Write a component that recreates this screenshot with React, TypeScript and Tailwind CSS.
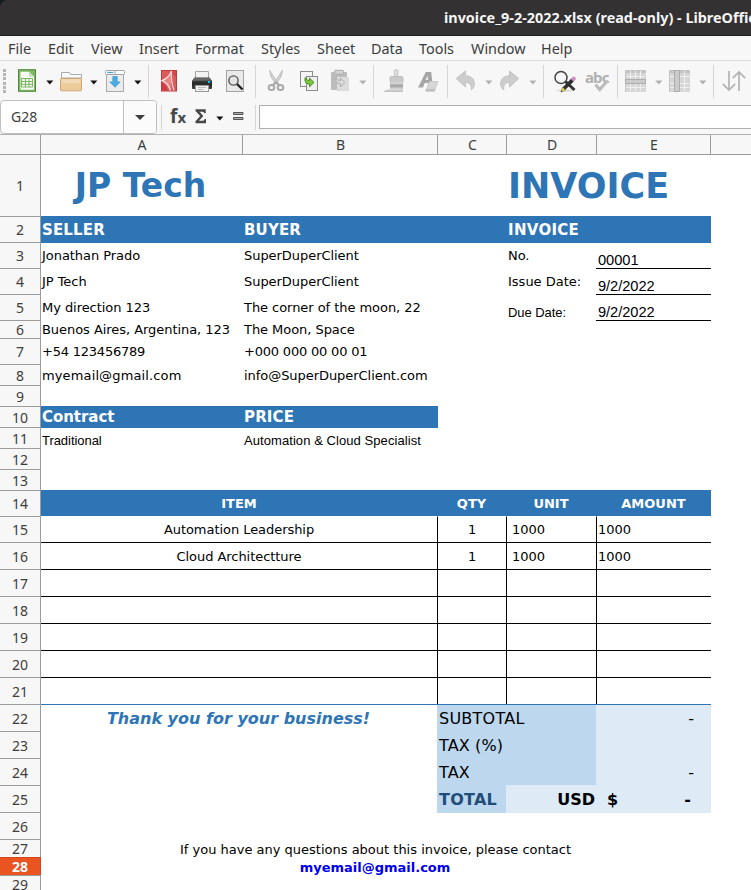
import type { ReactNode } from "react";

const UI = "font-['Noto_Sans',sans-serif]";
const LIB = "font-['Liberation_Sans',Arial,sans-serif]";

/* ---------- toolbar pieces ---------- */

function Icon({ ml, children }: { ml: string; children: ReactNode }) {
  return (
    <svg viewBox="0 0 24 24" className={`h-6 w-6 shrink-0 ${ml}`} fill="none">
      {children}
    </svg>
  );
}

function Arrow({ ml, color = "fill-[#111]" }: { ml: string; color?: string }) {
  return (
    <svg viewBox="0 0 8 24" className={`h-6 w-2 shrink-0 ${ml} ${color}`}>
      <path d="M0.3 11.5h7L3.8 15.6z" />
    </svg>
  );
}

function Sep({ ml }: { ml: string }) {
  return <div className={`h-[33px] w-px shrink-0 bg-[#d6d6d6] ${ml}`} />;
}

const GREY = "fill-[#b0b0b0]";

function TableIcon({ ml, vertical }: { ml: string; vertical?: boolean }) {
  return (
    <Icon ml={ml}>
      <rect x="1" y="1" width="21" height="22" rx="1" fill="#d6d6d6" />
      <path d="M1 2a1 1 0 0 1 1-1h19a1 1 0 0 1 1 1v2H1z" fill="#c3c3c3" />
      <path d="M1.500 1v22" stroke="#c6c6c6" />
      <path d="M6.5 2v20M11.5 2v20M16.5 2v20M2 7.5h19M2 14.500h19M2 18.5h19" stroke="#f0f0f0" />
      {vertical ? (
        <rect x="6.5" y="1.5" width="5" height="21" fill="#cbcbcb" stroke="#adadad" />
      ) : (
        <rect x="1.5" y="10.5" width="20" height="4" fill="#cbcbcb" stroke="#adadad" />
      )}
    </Icon>
  );
}

function Toolbar() {
  return (
    <div className="flex h-[39px] w-[760px] items-center pt-[1px]">
      <div className="ml-[3px] flex h-6 w-[3px] shrink-0 flex-col justify-between">
        {[0, 1, 2, 3, 4, 5].map((i) => (
          <div key={i} className="h-[3px] w-[3px] bg-[#b5b5b5]" />
        ))}
      </div>
      <Icon ml="ml-[9px]">
        <rect x="3.5" y="0.7" width="17" height="21.6" fill="#7fb765" stroke="#4c8a37" />
        <path d="M5.500 2.700h8.500l5 5v13.1H5.500z" fill="#f8fbf5" />
        <path d="M14 2.700v5h5z" fill="#c4e0b6" />
        <path d="M6.5 9.500h11v8.500h-11zM6.5 12.500h11M6.5 15.300h11M10.500 9.500V18M14 9.500V18" stroke="#7bb45f" />
      </Icon>
      <Arrow ml="ml-[7px]" />
      <Icon ml="ml-[5px]">
        <path d="M2.500 9V3.5h8l1 2h11V9z" fill="#fafafa" stroke="#aaa" />
        <rect x="1.5" y="9.500" width="21" height="12.300" rx="0.7" fill="#eccb9c" stroke="#cfa873" />
        <path d="M2.5 10.200h19v4h-19z" fill="#f0d9b4" />
      </Icon>
      <Arrow ml="ml-[7px]" />
      <Icon ml="ml-[5px]">
        <rect x="3.5" y="5" width="17" height="17.5" fill="#ececec" stroke="#aaa" />
        <rect x="2.5" y="1.5" width="19" height="4" rx="0.8" fill="#fff" stroke="#a5a5a5" />
        <path d="M4.3 3.5h6" stroke="#4ba3da" strokeWidth="1.3" />
        <path d="M12 1.5v4" stroke="#999" />
        <path d="M9.8 7.5h4.4v5.4h3L12 18.3l-5.2-5.4h3z" fill="#4bacdf" stroke="#2b8cc4" strokeWidth="0.6" />
      </Icon>
      <Arrow ml="ml-[7px]" />
      <Sep ml="ml-[6px]" />
      <Icon ml="ml-[8px]">
        <rect x="4.5" y="1.5" width="15" height="20.5" fill="#dd5a5c" stroke="#c0393d" />
        <path d="M5 2h14v6L12 2z" fill="#d9474a" />
        <path d="M14.500 2q-2.500 7-9.500 9.600 5.800 2 8.500 10 .4-10 1-19.600z" fill="#e88587" />
        <path d="M14.500 2q-2.500 7-9.500 9.600 5.800 2 8.500 10" stroke="#f9dede" strokeWidth="1.300" />
        <path d="M14.500 2q-.8 10 2.500 19.600" stroke="#f6d0d0" strokeWidth="1.300" />
        <path d="M5 13v8.500h6Q9 16 5 13z" fill="#cf3d42" />
      </Icon>
      <Icon ml="ml-[9px]">
        <path d="M5.500 9V2.500h13V9" fill="#f2f2f2" stroke="#a5a5a5" />
        <path d="M4.500 8.500h15l2.500 3.500v7q0 1-1 1H3q-1 0-1-1v-7z" fill="#3b3b3b" />
        <path d="M4.500 9h15l1.800 2.800H2.700z" fill="#666" />
        <path d="M2 13h20v4H2z" fill="#2b2b2b" />
        <rect x="18" y="12" width="2" height="2" fill="#19c1e6" />
        <rect x="5.500" y="16.500" width="13" height="6" fill="#f1f1f1" stroke="#999" />
        <path d="M8 18.500h8M8 20.500h5" stroke="#bbb" />
      </Icon>
      <Icon ml="ml-[9px]">
        <rect x="3.500" y="1.500" width="17" height="21" fill="#e9e9e9" stroke="#a3a3a3" />
        <path d="M13.500 14.500l6 6" stroke="#222" strokeWidth="2.400" />
        <circle cx="10.500" cy="11.500" r="4.600" fill="#e3e3e3" stroke="#555" strokeWidth="1.400" />
      </Icon>
      <Sep ml="ml-[8px]" />
      <Icon ml="ml-[8px]">
        <path d="M5.500 1.200l1.200 6 5 8 1.800-2zM18.500 1.200l-1.200 6-5 8-1.800-2z" fill="#d2d2d2" stroke="#b2b2b2" strokeWidth="0.700" />
        <ellipse cx="7.500" cy="18.500" rx="2.800" ry="2.600" stroke="#a9a9a9" strokeWidth="2" />
        <ellipse cx="16.500" cy="18.500" rx="2.800" ry="2.600" stroke="#a9a9a9" strokeWidth="2" />
        <path d="M8.800 16l3.200-2.500 3.200 2.500" stroke="#a9a9a9" strokeWidth="2.200" />
      </Icon>
      <Icon ml="ml-[9px]">
        <rect x="3.500" y="2.500" width="12" height="15" fill="#f5f5f5" stroke="#8b8b8b" />
        <rect x="9.500" y="7.500" width="11" height="14" fill="#efefef" stroke="#8b8b8b" />
        <path d="M8.200 8.500q-1.500 6.500 4.300 6.600v2.700l4.500-4.400-4.500-4.300v2.500q-3.300 0-4.300-3.100z" fill="#7cc83e" stroke="#3d8a17" strokeWidth="0.900" />
      </Icon>
      <Icon ml="ml-[7px]">
        <rect x="3" y="3" width="16" height="18" rx="1" fill="#bcbcbc" />
        <rect x="6.500" y="1.300" width="9" height="4" rx="1" fill="#d3d3d3" stroke="#aaa" />
        <rect x="9" y="8" width="12" height="14" fill="#dcdcdc" />
        <path d="M8 9q-1 6 4.500 6v3l4.500-4.500-4.500-4.500v2.500Q9 11.500 8 9z" fill="#d9d9d9" stroke="#ababab" strokeWidth="0.900" />
      </Icon>
      <Arrow ml="ml-[7px]" color={GREY} />
      <Sep ml="ml-[6px]" />
      <Icon ml="ml-[8px]">
        <path d="M12.800 7.500l-.6-5q0-2 2-2t2 2l-.6 5z" fill="#dcdcdc" stroke="#bdbdbd" strokeWidth="0.800" />
        <path d="M8 9q0-1.500 1.500-1.500h10Q21 7.500 21 9v4.500H8z" fill="#c9c9c9" stroke="#b2b2b2" strokeWidth="0.700" />
        <path d="M8 13h13v9.500H2Q2 21 8 20z" fill="#d2d2d2" />
        <path d="M8 15.300h13v3.200H8z" fill="#a9a9a9" />
        <path d="M2 22.500h19" stroke="#c0c0c0" />
      </Icon>
      <Icon ml="ml-[10px]">
        <path fillRule="evenodd" d="M9.800 3h5.400l1.600 14h-4.300l-.3-3H8.700L7 18.500H2zM12 11l-.5-4.500-1.800 4.500z" fill="#a6a6a6" />
        <path d="M13.500 12.500h8.500l-3.500 9.500H9.800z" fill="#d6d6d6" stroke="#c4c4c4" strokeWidth="0.800" />
        <path d="M10 20h8.500l.2 2.500H9.500z" fill="#bfbfbf" />
      </Icon>
      <Sep ml="ml-[7px]" />
      <Icon ml="ml-[5px]">
        <path d="M3.200 9.500L12.500 2v4.700c6.500.2 9.500 4.300 8.800 9.300-.3 2.200-1.500 4-3.300 5 1-3.500-.2-7.500-5.500-7.500V18z" fill="#cdcdcd" stroke="#bdbdbd" strokeWidth="0.800" />
      </Icon>
      <Arrow ml="ml-[8px]" color={GREY} />
      <Icon ml="ml-[5px]">
        <path d="M20.800 9.500L11.500 2v4.700C5 6.900 2 11 2.700 16c.3 2.200 1.500 4 3.300 5-1-3.500.2-7.500 5.500-7.500V18z" fill="#cdcdcd" stroke="#bdbdbd" strokeWidth="0.800" />
      </Icon>
      <Arrow ml="ml-[7px]" color={GREY} />
      <Sep ml="ml-[6px]" />
      <Icon ml="ml-[9px]">
        <ellipse cx="12" cy="21.500" rx="9" ry="1.500" fill="#dedede" />
        <circle cx="8" cy="8.500" r="6" fill="#f7f7f7" stroke="#444" strokeWidth="1.500" />
        <path d="M12.500 12.500l9 8.500" stroke="#333" strokeWidth="3" />
        <path d="M9.500 18.500L18 9.700l2.800 2.700L12 21z" fill="#303030" />
        <path d="M18 9.700l1.800-1.900q1.500-.8 2.500.5t.3 2.400L20.800 12.400z" fill="#d58bc8" />
        <path d="M9.500 18L8 23l4.500-1.700z" fill="#ead95a" stroke="#776c20" strokeWidth="0.500" />
        <path d="M8.500 21.500L8 23l1.500-.6z" fill="#111" />
      </Icon>
      <div className="relative ml-[8px] h-6 w-6 shrink-0">
        <div className={`text-[15px] leading-4 font-bold tracking-[-0.9px] text-[#b0b0b0] ${UI}`}>abc</div>
        <svg viewBox="0 0 24 24" className="absolute inset-0 h-6 w-6" fill="none">
          <path d="M10.500 15.500l4.200 5 8-9" stroke="#bcbcbc" strokeWidth="3.200" />
        </svg>
      </div>
      <Sep ml="ml-[8px]" />
      <TableIcon ml="ml-[6px]" />
      <Arrow ml="ml-[7px]" color={GREY} />
      <TableIcon ml="ml-[5px]" vertical />
      <Arrow ml="ml-[7px]" color={GREY} />
      <Sep ml="ml-[6px]" />
      <Icon ml="ml-[8px]">
        <path d="M7 2v19M0.800 14.800L7 21l6.200-6.200M17 22V3M10.800 9.200L17 3l6.200 6.200" stroke="#b3b3b3" strokeWidth="1.700" />
      </Icon>
    </div>
  );
}

function FormulaBar() {
  return (
    <div className="flex h-[34px] w-[760px] items-center">
      <div className="flex h-[34px] w-[157px] shrink-0 rounded-[4px] border border-[#bfbfbf] bg-white">
        <div className={`flex w-[122px] items-center pl-[10px] text-[14px] text-[#3d3d3d] ${UI}`}>G28</div>
        <div className="flex w-[33px] items-center justify-center rounded-r-[3px] border-l border-[#bfbfbf] bg-[#fbfbfb]">
          <svg viewBox="0 0 10 5" className="h-[5px] w-[10px] fill-[#3d3d3d]"><path d="M0 0h10L5 5z" /></svg>
        </div>
      </div>
      <div className="ml-[4px] h-[25px] w-px shrink-0 bg-[#d6d6d6]" />
      <div className={`ml-[8px] flex h-6 w-[18px] shrink-0 items-baseline font-bold text-[#484848] ${UI}`}>
        <span className="w-[7.5px] text-[19px] leading-[22px]">f</span>
        <span className="text-[15px] leading-[22px]">x</span>
      </div>
      <svg viewBox="0 0 12 24" className="ml-[7px] h-6 w-3 shrink-0 fill-[#484848]">
        <path d="M.5 4.300h10.200v4H9.300q-.3-1.500-1.800-1.500H4.700l3.600 4.200-4.200 4.700h3.900q1.300 0 1.700-1.800H11v4.400H.5v-2l4.700-5.300L.5 6z" />
      </svg>
      <Arrow ml="ml-[9px]" />
      <svg viewBox="0 0 12 24" className="ml-[9px] h-6 w-3 shrink-0" fill="#aaa" stroke="#555">
        <path d="M.5 7.500h9.500v2H.5zM.5 12.500h9.500v2H.5z" />
      </svg>
      <div className="ml-[10px] h-[25px] w-px shrink-0 bg-[#d6d6d6]" />
      <div className="ml-[3px] h-6 w-[520px] shrink-0 border border-[#b0b0b0] bg-white" />
    </div>
  );
}

/* ---------- sheet pieces ---------- */

function Row({ n, h, active, children }: { n: number; h: string; active?: boolean; children?: ReactNode }) {
  return (
    <div className={`flex ${h}`}>
      <div
        className={`flex w-[41px] shrink-0 items-center justify-center border-t border-r text-[14px] ${UI} ${
          active ? "border-[#d1481a] bg-[#e95420] font-bold text-white" : "border-[#9c9c9c] bg-[#f7f7f7] pt-px text-[#3d3d3d]"
        }`}
      >
        {n}
      </div>
      {children}
    </div>
  );
}

const A = "w-[201px] shrink-0 whitespace-nowrap pl-px";
const B = "w-[195px] shrink-0 whitespace-nowrap pl-[2px]";
const AB = "w-[396px] shrink-0 whitespace-nowrap text-center";
const C = "w-[69px] shrink-0 whitespace-nowrap";
const D = "w-[90px] shrink-0 whitespace-nowrap";
const E = "w-[115px] shrink-0 whitespace-nowrap";

function ItemRow({ n, h, pad, item = "", qty = "", unit = "", amount = "", line = true }: {
  n: number; h: string; pad: string; item?: string; qty?: string; unit?: string; amount?: string; line?: boolean;
}) {
  const top = line ? "border-t border-t-black" : "border-t border-t-transparent";
  return (
    <Row n={n} h={h}>
      <div className={`${AB} ${pad} ${top}`}>{item}</div>
      <div className={`${C} ${pad} ${top} border-l border-l-black text-center`}>{qty}</div>
      <div className={`${D} ${pad} ${top} border-l border-l-black pl-[5px]`}>{unit}</div>
      <div className={`${E} ${pad} ${top} border-l border-l-black pl-px`}>{amount}</div>
    </Row>
  );
}

const menus: [string, string][] = [
  ["File", "w-[40px]"], ["Edit", "w-[43px]"], ["View", "w-[48px]"], ["Insert", "w-[56px]"],
  ["Format", "w-[66px]"], ["Styles", "w-[56px]"], ["Sheet", "w-[54px]"], ["Data", "w-[48px]"],
  ["Tools", "w-[52px]"], ["Window", "w-[70px]"], ["Help", "w-[50px]"],
];

const columns: [string, string][] = [
  ["", "w-[40px]"], ["A", "w-[202px]"], ["B", "w-[195px]"], ["C", "w-[69px]"],
  ["D", "w-[90px]"], ["E", "w-[114px]"], ["", "w-[60px]"],
];

export default function App() {
  return (
    <div className="h-[890px] w-[751px] overflow-hidden bg-white font-['DejaVu_Sans',sans-serif] text-[13px] leading-4 tracking-[-0.05px] text-black">
      <div className="bg-[#101c1e]">
        <div className={`h-9 overflow-hidden rounded-tl-[7px] border-b border-[#1e1c1d] bg-[#333132] pl-[444px] text-[14.4px] leading-9 font-bold tracking-normal whitespace-nowrap text-[#f5f5f5] ${UI}`}>
          invoice_9-2-2022.xlsx (read-only) - LibreOffice Calc
        </div>
      </div>

      <div className="h-[118px] overflow-hidden bg-[#f7f7f7] tracking-normal">
        <div className={`flex h-[25px] border-b border-[#dadada] pl-2 text-[14.4px] leading-[25px] text-[#3d3d3d] ${UI}`}>
          {menus.map(([label, w]) => (
            <div key={label} className={`shrink-0 ${w}`}>{label}</div>
          ))}
        </div>
        <Toolbar />
        <FormulaBar />
        <div className={`flex h-5 w-[780px] border-t border-[#b0b0b0] text-[14px] leading-5 text-[#3d3d3d] ${UI}`}>
          {columns.map(([label, w], i) => (
            <div key={i} className={`shrink-0 pl-px text-center ${w} ${i > 0 ? "border-l border-[#9c9c9c]" : ""}`}>{label}</div>
          ))}
        </div>
      </div>

      <div className="w-[751px]">
        <Row n={1} h="h-[62px]">
          <div className="flex w-[710px] border-t border-[#9c9c9c] pt-[11px] leading-10 font-bold tracking-normal text-[#2e75b6]">
            <div className={`${A} pr-[3px] text-center text-[33px]`}>JP Tech</div>
            <div className="w-[264px] shrink-0" />
            <div className="pl-[2px] text-[35px]">INVOICE</div>
          </div>
        </Row>
        <Row n={2} h="h-[26px]">
          <div className="flex h-[27px] w-[670px] bg-[#2e75b6] pt-1 text-[15px] leading-5 font-bold tracking-[0.15px] text-white">
            <div className={A}>SELLER</div>
            <div className={B}>BUYER</div>
            <div className={C} />
            <div className={`${D} pl-[2px] tracking-[0.3px]`}>INVOICE</div>
          </div>
        </Row>
        <Row n={3} h="h-[26px]">
          <div className={`${A} pt-1.5`}>Jonathan Prado</div>
          <div className={`${B} pt-1.5`}>SuperDuperClient</div>
          <div className={C} />
          <div className={`${D} pt-1.5 pl-[2px]`}>No.</div>
          <div className={`${E} pt-2.5 pl-[2px] text-[14.67px] ${LIB}`}>00001</div>
        </Row>
        <Row n={4} h="h-[26px]">
          <div className={`${A} pt-1.5`}>JP Tech</div>
          <div className={`${B} pt-1.5`}>SuperDuperClient</div>
          <div className={C} />
          <div className={`${D} pt-1.5 pl-[2px] tracking-normal`}>Issue Date:</div>
          <div className={`${E} border-t border-black pt-[9px] pl-[2px] text-[14.67px] ${LIB}`}>9/2/2022</div>
        </Row>
        <Row n={5} h="h-[26px]">
          <div className={`${A} pt-1.5`}>My direction 123</div>
          <div className={`${B} pt-1.5`}>The corner of the moon, 22</div>
          <div className={C} />
          <div className={`${D} pt-[11px] pl-[2px] ${LIB}`}>Due Date:</div>
          <div className={`${E} border-t border-black pt-[9px] pl-[2px] text-[14.67px] ${LIB}`}>9/2/2022</div>
        </Row>
        <Row n={6} h="h-[18px]">
          <div className={`${A} pt-0.5`}>Buenos Aires, Argentina, 123</div>
          <div className={`${B} pt-0.5`}>The Moon, Space</div>
          <div className={C} />
          <div className={D} />
          <div className={`${E} border-t border-black`} />
        </Row>
        <Row n={7} h="h-[26px]">
          <div className={`${A} pt-1.5 tracking-[-0.22px]`}>+54 123456789</div>
          <div className={`${B} pt-1.5 tracking-[-0.2px]`}>+000 000 00 00 01</div>
        </Row>
        <Row n={8} h="h-[21px]">
          <div className={`${A} pt-1 tracking-[0.13px]`}>myemail@gmail.com</div>
          <div className={`${B} pt-1`}>info@SuperDuperClient.com</div>
        </Row>
        <Row n={9} h="h-[21px]" />
        <Row n={10} h="h-[21px]">
          <div className="flex h-[22px] w-[397px] bg-[#2e75b6] pt-px text-[15px] leading-5 font-bold text-white">
            <div className={A}>Contract</div>
            <div className={`${B} tracking-[0.15px]`}>PRICE</div>
          </div>
        </Row>
        <Row n={11} h="h-[21px]">
          <div className={`${A} pt-1.5 ${LIB}`}>Traditional</div>
          <div className={`${B} pt-1.5 tracking-[0.07px] ${LIB}`}>Automation &amp; Cloud Specialist</div>
        </Row>
        <Row n={12} h="h-[21px]" />
        <Row n={13} h="h-[21px]" />
        <Row n={14} h="h-[26px]">
          <div className="flex w-[670px] bg-[#2e75b6] pt-1.5 font-bold tracking-normal text-white">
            <div className={AB}>ITEM</div>
            <div className={`${C} text-center`}>QTY</div>
            <div className={`${D} text-center`}>UNIT</div>
            <div className={`${E} text-center`}>AMOUNT</div>
          </div>
        </Row>
        <ItemRow n={15} h="h-[26px]" pad="pt-[5px]" item="Automation Leadership" qty="1" unit="1000" amount="1000" line={false} />
        <ItemRow n={16} h="h-[27px]" pad="pt-1.5" item="Cloud Architectture" qty="1" unit="1000" amount="1000" />
        {[17, 18, 19, 20, 21].map((n) => (
          <ItemRow key={n} n={n} h="h-[27px]" pad="pt-1.5" />
        ))}
        <Row n={22} h="h-[27px]">
          <div className="flex w-[670px] border-t border-[#2e75b6] text-[16px] leading-5">
            <div className={`${AB} pt-1 pr-px font-bold tracking-normal text-[#2e75b6] italic`}>Thank you for your business!</div>
            <div className="w-[159px] bg-[#bdd7ee] pt-1 pl-[2px] tracking-[0.25px]">SUBTOTAL</div>
            <div className={`${E} bg-[#deeaf6] pt-1 pr-[17px] text-right`}>-</div>
          </div>
        </Row>
        <Row n={23} h="h-[27px]">
          <div className="flex w-[670px] text-[16px] leading-5">
            <div className={AB} />
            <div className="w-[159px] bg-[#bdd7ee] pt-[5px] pl-[2px] tracking-[0.15px]">TAX (%)</div>
            <div className={`${E} bg-[#deeaf6]`} />
          </div>
        </Row>
        <Row n={24} h="h-[27px]">
          <div className="flex w-[670px] text-[16px] leading-5">
            <div className={AB} />
            <div className="w-[159px] bg-[#bdd7ee] pt-[5px] pl-[2px] tracking-[0.15px]">TAX</div>
            <div className={`${E} bg-[#deeaf6] pt-[5px] pr-[17px] text-right`}>-</div>
          </div>
        </Row>
        <Row n={25} h="h-[27px]">
          <div className="flex h-[28px] w-[670px] text-[16px] leading-5 font-bold tracking-normal">
            <div className={AB} />
            <div className={`${C} bg-[#bdd7ee] pt-[5px] pl-[2px] tracking-[0.25px] text-[#1f4e79]`}>TOTAL</div>
            <div className={`${D} bg-[#deeaf6] pt-[5px] pr-px text-right`}>USD</div>
            <div className={`${E} flex justify-between bg-[#deeaf6] pt-[5px] pr-5 pl-[11px]`}>
              <span>$</span>
              <span>-</span>
            </div>
          </div>
        </Row>
        <Row n={26} h="h-[27px]" />
        <Row n={27} h="h-[18px]">
          <div className="w-[670px] pt-[3px] pr-px text-center tracking-normal">If you have any questions about this invoice, please contact</div>
        </Row>
        <Row n={28} h="h-[18px]" active>
          <div className="w-[670px] pt-[3px] pr-0.5 text-center font-bold tracking-normal text-[#0000ee]">myemail@gmail.com</div>
        </Row>
        <Row n={29} h="h-[18px]" />
      </div>
    </div>
  );
}
